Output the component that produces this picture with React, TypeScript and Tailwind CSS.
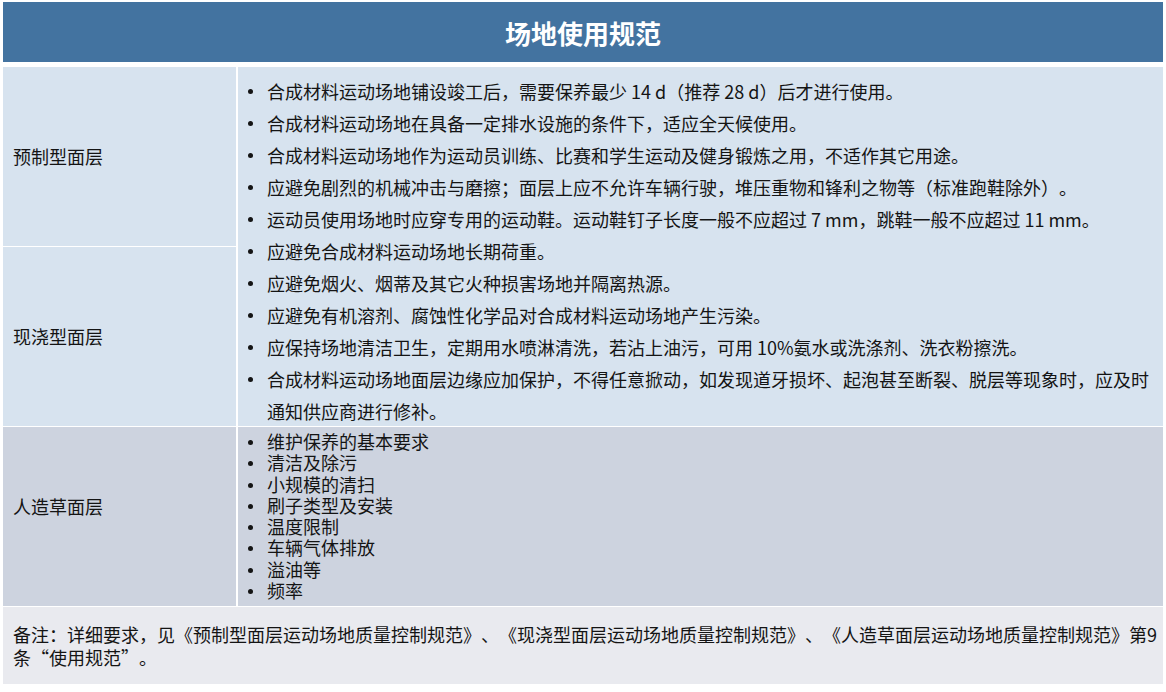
const FONT = "font-['Noto_Sans_CJK_SC','Noto_Sans',sans-serif]"

const rules = [
  "合成材料运动场地铺设竣工后，需要保养最少 14 d（推荐 28 d）后才进行使用。",
  "合成材料运动场地在具备一定排水设施的条件下，适应全天候使用。",
  "合成材料运动场地作为运动员训练、比赛和学生运动及健身锻炼之用，不适作其它用途。",
  "应避免剧烈的机械冲击与磨擦；面层上应不允许车辆行驶，堆压重物和锋利之物等（标准跑鞋除外）。",
  "运动员使用场地时应穿专用的运动鞋。运动鞋钉子长度一般不应超过 7 mm，跳鞋一般不应超过 11 mm。",
  "应避免合成材料运动场地长期荷重。",
  "应避免烟火、烟蒂及其它火种损害场地并隔离热源。",
  "应避免有机溶剂、腐蚀性化学品对合成材料运动场地产生污染。",
  "应保持场地清洁卫生，定期用水喷淋清洗，若沾上油污，可用 10%氨水或洗涤剂、洗衣粉擦洗。",
]

const turf = ["维护保养的基本要求", "清洁及除污", "小规模的清扫", "刷子类型及安装", "温度限制", "车辆气体排放", "溢油等", "频率"]

function Bullet({ children, dotTop }: { children: React.ReactNode; dotTop: string }) {
  return (
    <li className="flex">
      <span className="w-[29px] shrink-0 pl-[10px]">
        <span className={`block h-[5px] w-[5px] rounded-full bg-[#141414] ${dotTop}`} />
      </span>
      <span>{children}</span>
    </li>
  )
}

export default function App() {
  return (
    <div className={`h-[692px] w-[1166px] bg-white pl-[3px] pt-[2px] text-[18px] text-[#141414] [text-spacing-trim:space-all] ${FONT}`}>
      <div className="w-[1160px]">
        {/* title bar */}
        <div className="flex h-[60px] items-center justify-center bg-[#4373a0]">
          <h1 className="text-[26px] font-bold text-white">场地使用规范</h1>
        </div>

        <div className="mt-[5px] grid grid-cols-[233px_1fr] grid-rows-[179px_179px_179px_77px] gap-x-[2px] gap-y-px bg-white">
          <div className="flex items-center bg-[#d7e3ef] pl-[10px]">预制型面层</div>
          <div className="row-span-2 bg-[#d7e3ef] pt-[8px]">
            <ul className="leading-[32px]">
              {rules.map((r) => (
                <Bullet key={r} dotTop="mt-[14px]">{r}</Bullet>
              ))}
              <Bullet dotTop="mt-[14px]">
                合成材料运动场地面层边缘应加保护，不得任意掀动，如发现道牙损坏、起泡甚至断裂、脱层等现象时，应及时
                <br />
                通知供应商进行修补。
              </Bullet>
            </ul>
          </div>
          <div className="flex items-center bg-[#d7e3ef] pl-[10px]">现浇型面层</div>

          <div className="flex items-center bg-[#cdd3df] pb-[20px] pl-[10px]">人造草面层</div>
          <div className="bg-[#cdd3df] pt-[4px]">
            <ul className="leading-[21.3px]">
              {turf.map((t) => (
                <Bullet key={t} dotTop="mt-[9px]">{t}</Bullet>
              ))}
            </ul>
          </div>

          <div className="col-span-2 bg-[#e9eaef] pl-[10px] pt-[16px] leading-[23px]">
            备注：详细要求，见《预制型面层运动场地质量控制规范》、《现浇型面层运动场地质量控制规范》、《人造草面层运动场地质量控制规范》第9
            <br />
            条“使用规范”。
          </div>
        </div>
      </div>
    </div>
  )
}
